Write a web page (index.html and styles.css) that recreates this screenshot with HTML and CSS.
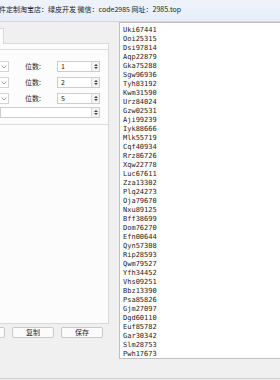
FILE: index.html
```html
<!DOCTYPE html>
<html>
<head>
<meta charset="utf-8">
<link rel="stylesheet" href="styles.css">
</head>
<body>
<div class="win">
  <div class="titlebar"><span class="title">件定制淘宝店：绿皮开发 微信：code2985 网址：2985.top</span></div>
  <div class="main">
    <div class="left">
      <div class="tabstrip"><div class="tab"></div></div>
      <div class="tabpage">
        <div class="group">
          <div class="row">
            <div class="combo"><svg width="6" height="4" viewBox="0 0 6 4"><path d="M0.5 0.5 L3 3 L5.5 0.5" stroke="#8a8a8a" fill="none" stroke-width="0.8"/></svg></div>
            <span class="lbl">位数:</span>
            <div class="num"><span class="val">1</span><span class="spin"><svg width="4" height="2" viewBox="0 0 4 2"><path d="M0 2L2 0L4 2Z" fill="#444"/></svg><svg width="4" height="2" viewBox="0 0 4 2"><path d="M0 0L2 2L4 0Z" fill="#444"/></svg></span></div>
          </div>
          <div class="row">
            <div class="combo"><svg width="6" height="4" viewBox="0 0 6 4"><path d="M0.5 0.5 L3 3 L5.5 0.5" stroke="#8a8a8a" fill="none" stroke-width="0.8"/></svg></div>
            <span class="lbl">位数:</span>
            <div class="num"><span class="val">2</span><span class="spin"><svg width="4" height="2" viewBox="0 0 4 2"><path d="M0 2L2 0L4 2Z" fill="#444"/></svg><svg width="4" height="2" viewBox="0 0 4 2"><path d="M0 0L2 2L4 0Z" fill="#444"/></svg></span></div>
          </div>
          <div class="row">
            <div class="combo"><svg width="6" height="4" viewBox="0 0 6 4"><path d="M0.5 0.5 L3 3 L5.5 0.5" stroke="#8a8a8a" fill="none" stroke-width="0.8"/></svg></div>
            <span class="lbl">位数:</span>
            <div class="num"><span class="val">5</span><span class="spin"><svg width="4" height="2" viewBox="0 0 4 2"><path d="M0 2L2 0L4 2Z" fill="#444"/></svg><svg width="4" height="2" viewBox="0 0 4 2"><path d="M0 0L2 2L4 0Z" fill="#444"/></svg></span></div>
          </div>
          <div class="row last">
            <div class="num wide"><span class="val"></span><span class="spin"><svg width="4" height="2" viewBox="0 0 4 2"><path d="M0 2L2 0L4 2Z" fill="#444"/></svg><svg width="4" height="2" viewBox="0 0 4 2"><path d="M0 0L2 2L4 0Z" fill="#444"/></svg></span></div>
          </div>
        </div>
      </div>
      <div class="buttons">
        <button class="btn"></button>
        <button class="btn">复制</button>
        <button class="btn">保存</button>
      </div>
    </div>
    <div class="right">
<div class="textarea">Uki67441
Ooi25315
Dsi97814
Aqp22879
Gka75288
Sgw96936
Tyh83192
Kwm31590
Urz84024
Gzw02531
Aji99239
Iyk88666
Mlk55719
Cqf40934
Rrz86726
Xqw22778
Luc67611
Zza13302
Plq24273
Oja79670
Nxu89125
Bff38699
Dom76270
Efn00644
Qyn57308
Rip28593
Qwm79527
Yfh34452
Vhs09251
Bbz13390
Psa85826
Gjm27097
Dgd60110
Euf85782
Gar30342
Slm28753
Pwh17673</div>
    </div>
  </div>
  <div class="status"></div>
</div>
</body>
</html>
```

FILE: styles.css
```css
html, body {
  margin: 0;
  padding: 0;
}
body {
  width: 280px;
  height: 380px;
  overflow: hidden;
  background: #f0f0f0;
  font-family: "Noto Sans CJK SC", "Noto Sans", sans-serif;
  font-size: 7px;
  color: #1e1e1e;
}
.win {
  width: 280px;
  height: 380px;
  display: flex;
  flex-direction: column;
}
.titlebar {
  height: 22px;
  flex: none;
  box-sizing: border-box;
  padding-bottom: 2px;
  background: linear-gradient(#eef3fb, #e8eef8);
  border-bottom: 1px solid #d6d6d6;
  display: flex;
  align-items: center;
  white-space: nowrap;
  overflow: hidden;
}
.title {
  margin-left: -1px;
  line-height: 1;
  color: #222;
}
.main {
  display: flex;
  height: 356px;
  flex: none;
}
.left {
  width: 110px;
  flex: none;
  display: flex;
  flex-direction: column;
}
.tabstrip {
  height: 21px;
  display: flex;
  align-items: flex-end;
}
.tab {
  width: 3px;
  height: 15px;
  background: #fcfcfc;
  border-top: 1px solid #d9d9d9;
  border-right: 1px solid #d9d9d9;
  margin-bottom: -1px;
  position: relative;
  z-index: 1;
}
.tabpage {
  width: 109px;
  height: 281px;
  box-sizing: border-box;
  background: #fcfcfc;
  border: 1px solid #d9d9d9;
  border-left: none;
  padding-top: 5px;
}
.group {
  height: 76px;
  box-sizing: border-box;
  border-top: 1px solid #dcdcdc;
  border-bottom: 1px solid #dcdcdc;
  padding-top: 11px;
  display: flex;
  flex-direction: column;
  gap: 5px;
}
.row {
  display: flex;
  align-items: center;
  height: 11px;
}
.row.last {
  margin-top: -2px;
}
.combo {
  width: 9px;
  height: 11px;
  box-sizing: border-box;
  border: 1px solid #d3d3d3;
  border-left: none;
  background: #fff;
  display: flex;
  align-items: center;
  justify-content: center;
}
.combo svg {
  display: block;
}
.lbl {
  margin-left: 16px;
  width: 32px;
  line-height: 11px;
}
.num {
  width: 43px;
  height: 11px;
  box-sizing: border-box;
  border: 1px solid #cdcdcd;
  background: #fff;
  display: flex;
  align-items: center;
  justify-content: space-between;
}
.num.wide {
  width: 100px;
}
.val {
  padding-left: 3px;
  line-height: 9px;
}
.spin {
  width: 8px;
  height: 9px;
  box-sizing: border-box;
  border-left: 1px solid #dadada;
  background: #f3f3f3;
  display: flex;
  flex-direction: column;
  justify-content: center;
  align-items: center;
  gap: 1px;
}
.spin svg {
  display: block;
}
.buttons {
  width: 109px;
  box-sizing: border-box;
  display: flex;
  justify-content: flex-end;
  gap: 7px;
  padding-right: 6px;
  margin-top: 3px;
}
.btn {
  flex: none;
  width: 42px;
  height: 11px;
  padding: 0;
  box-sizing: border-box;
  border: 1px solid #c9c9c9;
  border-radius: 2px;
  background: #fbfbfb;
  font-family: "Noto Sans CJK SC", "Noto Sans", sans-serif;
  font-size: 7px;
  line-height: 9px;
  color: #1e1e1e;
}
.right {
  flex: 1;
  margin-left: 9px;
  min-width: 0;
}
.textarea {
  height: 337px;
  box-sizing: border-box;
  background: #fff;
  border: 1px solid #bfbfbf;
  border-right: none;
  padding: 3px 0 0 3px;
  font-family: "DejaVu Sans Mono", "Liberation Mono", monospace;
  font-size: 7px;
  line-height: 9px;
  color: #222;
  white-space: pre;
  overflow: hidden;
}
.status {
  flex: 1;
  border-top: 1px solid #cfcfcf;
  background: #f0f0f0;
}
```
